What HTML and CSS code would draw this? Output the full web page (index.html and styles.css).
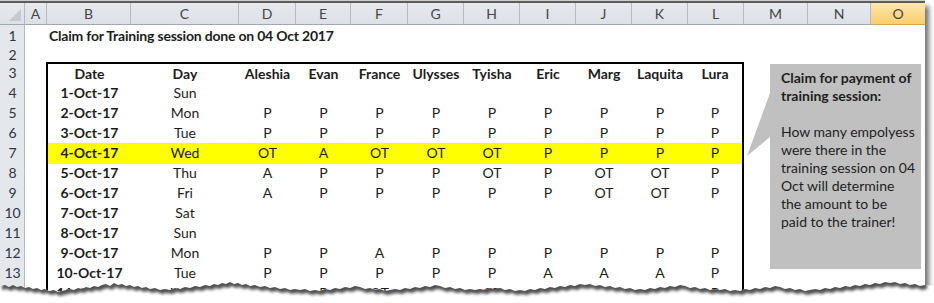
FILE: index.html
```html
<!DOCTYPE html>
<html>
<head>
<meta charset="utf-8">
<link rel="stylesheet" href="styles.css">
</head>
<body>
<div class="page">
  <div class="colhdr">
    <div class="corner"><span class="tri"></span></div>
    <div class="ch">A</div><div class="ch">B</div><div class="ch">C</div><div class="ch">D</div>
    <div class="ch">E</div><div class="ch">F</div><div class="ch">G</div><div class="ch">H</div>
    <div class="ch">I</div><div class="ch">J</div><div class="ch">K</div><div class="ch">L</div>
    <div class="ch">M</div><div class="ch">N</div><div class="ch sel">O</div>
  </div>

  <div class="row r1"><div class="rh">1</div><div class="title">Claim for Training session done on 04 Oct 2017</div></div>
  <div class="row r2"><div class="rh">2</div></div>

  <div class="row"><div class="rh">3</div>
    <div class="tbl top bold"><div>Date</div><div>Day</div><div>Aleshia</div><div>Evan</div><div>France</div><div>Ulysses</div><div>Tyisha</div><div>Eric</div><div>Marg</div><div>Laquita</div><div>Lura</div></div>
  </div>
  <div class="row"><div class="rh">4</div>
    <div class="tbl"><div class="d">1-Oct-17</div><div>Sun</div><div></div><div></div><div></div><div></div><div></div><div></div><div></div><div></div><div></div></div>
  </div>
  <div class="row"><div class="rh">5</div>
    <div class="tbl"><div class="d">2-Oct-17</div><div>Mon</div><div>P</div><div>P</div><div>P</div><div>P</div><div>P</div><div>P</div><div>P</div><div>P</div><div>P</div></div>
  </div>
  <div class="row"><div class="rh">6</div>
    <div class="tbl"><div class="d">3-Oct-17</div><div>Tue</div><div>P</div><div>P</div><div>P</div><div>P</div><div>P</div><div>P</div><div>P</div><div>P</div><div>P</div></div>
  </div>
  <div class="row"><div class="rh">7</div>
    <div class="tbl hl"><div class="d">4-Oct-17</div><div>Wed</div><div>OT</div><div>A</div><div>OT</div><div>OT</div><div>OT</div><div>P</div><div>P</div><div>P</div><div>P</div></div>
  </div>
  <div class="row"><div class="rh">8</div>
    <div class="tbl"><div class="d">5-Oct-17</div><div>Thu</div><div>A</div><div>P</div><div>P</div><div>P</div><div>OT</div><div>P</div><div>OT</div><div>OT</div><div>P</div></div>
  </div>
  <div class="row"><div class="rh">9</div>
    <div class="tbl"><div class="d">6-Oct-17</div><div>Fri</div><div>A</div><div>P</div><div>P</div><div>P</div><div>P</div><div>P</div><div>OT</div><div>OT</div><div>P</div></div>
  </div>
  <div class="row"><div class="rh">10</div>
    <div class="tbl"><div class="d">7-Oct-17</div><div>Sat</div><div></div><div></div><div></div><div></div><div></div><div></div><div></div><div></div><div></div></div>
  </div>
  <div class="row"><div class="rh">11</div>
    <div class="tbl"><div class="d">8-Oct-17</div><div>Sun</div><div></div><div></div><div></div><div></div><div></div><div></div><div></div><div></div><div></div></div>
  </div>
  <div class="row"><div class="rh">12</div>
    <div class="tbl"><div class="d">9-Oct-17</div><div>Mon</div><div>P</div><div>P</div><div>A</div><div>P</div><div>P</div><div>P</div><div>P</div><div>P</div><div>P</div></div>
  </div>
  <div class="row"><div class="rh">13</div>
    <div class="tbl"><div class="d">10-Oct-17</div><div>Tue</div><div>P</div><div>P</div><div>P</div><div>P</div><div>P</div><div>A</div><div>A</div><div>A</div><div>P</div></div>
  </div>
  <div class="row"><div class="rh">14</div>
    <div class="tbl"><div class="d">11-Oct-17</div><div>Wed</div><div>OT</div><div>P</div><div>OT</div><div>OT</div><div>OT</div><div>A</div><div>A</div><div>P</div><div>P</div></div>
  </div>

  <div class="callout">
    <svg class="wedge" width="26" height="70" viewBox="0 0 26 70"><polygon points="24,0 1,63 24,44" fill="#c0c0c0"/></svg>
    <p class="ct"><b>Claim for payment of training session:</b></p>
    <p class="cb">How many empolyess were there in the training session on 04 Oct will determine the amount to be paid to the trainer!</p>
  </div>
</div>

<svg class="torn" width="934" height="27" viewBox="0 0 934 27">
  <defs>
    <clipPath id="below">
      <path d="M0,9 L5,8 L9,10 L13,8 L17,10 L21,9 L25,11 L29,10 L33,12 L37,11 L41,13 L45,12 L49,14 L54,13 L58,15 L62,14 L66,13 L70,12 L74,13 L78,11 L82,12 L86,10 L90,11 L94,9 L98,10 L102,8 L106,7 L110,9 L114,6 L118,8 L122,7 L126,9 L130,8 L134,10 L138,9 L142,11 L146,10 L150,12 L155,11 L160,13 L165,12 L170,13 L175,11 L180,12 L185,10 L190,11 L195,9 L200,10 L205,8 L210,9 L214,7 L218,8 L222,6 L226,7 L230,5 L234,7 L238,6 L242,8 L246,7 L250,9 L255,8 L260,10 L265,9 L270,11 L275,10 L280,12 L285,11 L290,13 L295,12 L300,13 L305,12 L310,14 L315,13 L320,14 L325,12 L330,13 L335,11 L340,12 L345,10 L350,11 L355,9 L360,10 L365,12 L370,11 L375,13 L380,12 L385,14 L390,13 L395,12 L400,13 L405,11 L410,12 L415,10 L420,11 L425,9 L430,10 L435,8 L440,9 L445,11 L450,10 L455,12 L460,11 L465,13 L470,12 L475,13 L480,12 L485,13 L490,11 L495,12 L500,11 L505,13 L510,12 L515,14 L520,13 L525,14 L530,12 L535,13 L540,11 L545,12 L550,10 L555,11 L560,9 L565,10 L570,8 L575,9 L580,7 L585,8 L590,7 L595,9 L600,8 L605,10 L610,9 L615,11 L620,10 L625,12 L630,11 L635,13 L640,12 L645,13 L650,11 L655,12 L660,10 L665,11 L670,9 L675,10 L680,8 L685,9 L690,11 L695,10 L700,12 L705,11 L710,13 L715,12 L720,13 L725,12 L730,14 L735,13 L740,14 L745,12 L750,13 L755,11 L760,12 L765,10 L770,11 L775,9 L780,10 L785,12 L790,11 L795,13 L800,12 L805,14 L810,13 L815,12 L820,13 L825,11 L830,12 L835,10 L840,11 L845,9 L850,10 L855,8 L860,9 L865,7 L870,8 L875,6 L880,7 L885,5 L890,6 L895,5 L900,7 L905,6 L910,8 L915,7 L920,9 L925,8 L934,9 L934,27 L0,27 Z"/>
    </clipPath>
    <filter id="blur" x="-5%" y="-100%" width="110%" height="300%"><feGaussianBlur stdDeviation="1.8"/></filter>
  </defs>
  <rect x="0" y="0" width="934" height="27" fill="#fff" clip-path="url(#below)"/>
  <g clip-path="url(#below)">
    <path filter="url(#blur)" fill="#3e3e3e" opacity="0.9" transform="translate(2,4)" d="M0,9 L5,8 L9,10 L13,8 L17,10 L21,9 L25,11 L29,10 L33,12 L37,11 L41,13 L45,12 L49,14 L54,13 L58,15 L62,14 L66,13 L70,12 L74,13 L78,11 L82,12 L86,10 L90,11 L94,9 L98,10 L102,8 L106,7 L110,9 L114,6 L118,8 L122,7 L126,9 L130,8 L134,10 L138,9 L142,11 L146,10 L150,12 L155,11 L160,13 L165,12 L170,13 L175,11 L180,12 L185,10 L190,11 L195,9 L200,10 L205,8 L210,9 L214,7 L218,8 L222,6 L226,7 L230,5 L234,7 L238,6 L242,8 L246,7 L250,9 L255,8 L260,10 L265,9 L270,11 L275,10 L280,12 L285,11 L290,13 L295,12 L300,13 L305,12 L310,14 L315,13 L320,14 L325,12 L330,13 L335,11 L340,12 L345,10 L350,11 L355,9 L360,10 L365,12 L370,11 L375,13 L380,12 L385,14 L390,13 L395,12 L400,13 L405,11 L410,12 L415,10 L420,11 L425,9 L430,10 L435,8 L440,9 L445,11 L450,10 L455,12 L460,11 L465,13 L470,12 L475,13 L480,12 L485,13 L490,11 L495,12 L500,11 L505,13 L510,12 L515,14 L520,13 L525,14 L530,12 L535,13 L540,11 L545,12 L550,10 L555,11 L560,9 L565,10 L570,8 L575,9 L580,7 L585,8 L590,7 L595,9 L600,8 L605,10 L610,9 L615,11 L620,10 L625,12 L630,11 L635,13 L640,12 L645,13 L650,11 L655,12 L660,10 L665,11 L670,9 L675,10 L680,8 L685,9 L690,11 L695,10 L700,12 L705,11 L710,13 L715,12 L720,13 L725,12 L730,14 L735,13 L740,14 L745,12 L750,13 L755,11 L760,12 L765,10 L770,11 L775,9 L780,10 L785,12 L790,11 L795,13 L800,12 L805,14 L810,13 L815,12 L820,13 L825,11 L830,12 L835,10 L840,11 L845,9 L850,10 L855,8 L860,9 L865,7 L870,8 L875,6 L880,7 L885,5 L890,6 L895,5 L900,7 L905,6 L910,8 L915,7 L920,9 L925,8 L925,-20 L0,-20 Z"/>
  </g>
</svg>
</body>
</html>
```
FILE: styles.css
```css
html, body {
  margin: 0;
  padding: 0;
  background: #fff;
}
body {
  position: relative;
  width: 934px;
  height: 303px;
  overflow: hidden;
  font-family: Lato, "Liberation Sans", sans-serif;
  font-size: 14px;
  color: #1c1c1c;
}
.page {
  position: relative;
  width: 925px;
  height: 300px;
  margin-top: 1px;
  border-top: 2px solid #5c5c5c;
  box-shadow: 0 -1px 0 #cfcfcf, 4px 5px 5px rgba(0, 0, 0, 0.55);
  background: #fff;
  overflow: hidden;
}
.colhdr, .row {
  display: grid;
  grid-template-columns: 25px 22px 84px 108px 57px 55px 57px 56px 56px 56px 56px 56px 56px 64px 63px 54px;
}
.colhdr {
  height: 22px;
}
.colhdr > div {
  box-sizing: border-box;
  background: linear-gradient(#e6e9ee, #dde1e7);
  border-right: 1px solid #b3bac3;
  border-bottom: 1px solid #9ea7b2;
  text-align: center;
  line-height: 21px;
  color: #454545;
  font-size: 14px;
}
.colhdr > .sel {
  background: linear-gradient(#fce7ad, #f8cf6c);
  border-right: none;
  border-bottom-color: #d7a845;
}
.corner {
  position: relative;
}
.tri {
  position: absolute;
  right: 3px;
  bottom: 3px;
  width: 0;
  height: 0;
  border-left: 12px solid transparent;
  border-bottom: 12px solid #c5cad1;
}
.row {
  height: 20px;
}
.row.r1 { height: 21px; }
.row.r2 { height: 17px; }
.rh {
  box-sizing: border-box;
  background: #e4e7ec;
  border-right: 1px solid #b3bac3;
  border-bottom: 1px solid #b3bac3;
  text-align: center;
  color: #2e3546;
  font-size: 14px;
  line-height: 20px;
  padding-left: 1px;
}
.r1 .rh { line-height: 21px; }
.r2 .rh { line-height: 17px; }
.title {
  grid-column: 3 / span 12;
  padding-left: 2px;
  font-weight: bold;
  white-space: nowrap;
  line-height: 21px;
  font-size: 14px;
  letter-spacing: -0.2px;
}
.tbl {
  grid-column: 3 / span 11;
  margin-left: -1px;
  box-sizing: border-box;
  border-left: 2px solid #000;
  border-right: 2px solid #000;
  display: grid;
  grid-template-columns: 83px 108px 57px 55px 57px 56px 56px 56px 56px 56px 54px;
  line-height: 20px;
  text-align: center;
  white-space: nowrap;
}
.tbl.top {
  border-top: 2px solid #000;
  margin-top: -1px;
  height: 21px;
  line-height: 20px;
}
.tbl.bold { font-weight: bold; }
.tbl .d { font-weight: bold; }
.tbl.hl { background: #ffff00; }

.callout {
  position: absolute;
  left: 770px;
  top: 61px;
  width: 151px;
  height: 205px;
  box-sizing: border-box;
  background: #c0c0c0;
  padding: 5px 6px 0 11px;
  font-size: 14px;
  line-height: 18px;
  color: #1e1e1e;
}
.wedge {
  position: absolute;
  left: -24px;
  top: 29px;
}
.ct {
  margin: 0 0 18px;
}
.cb {
  margin: 0;
}
.torn {
  position: absolute;
  left: 0;
  top: 277px;
}
```
